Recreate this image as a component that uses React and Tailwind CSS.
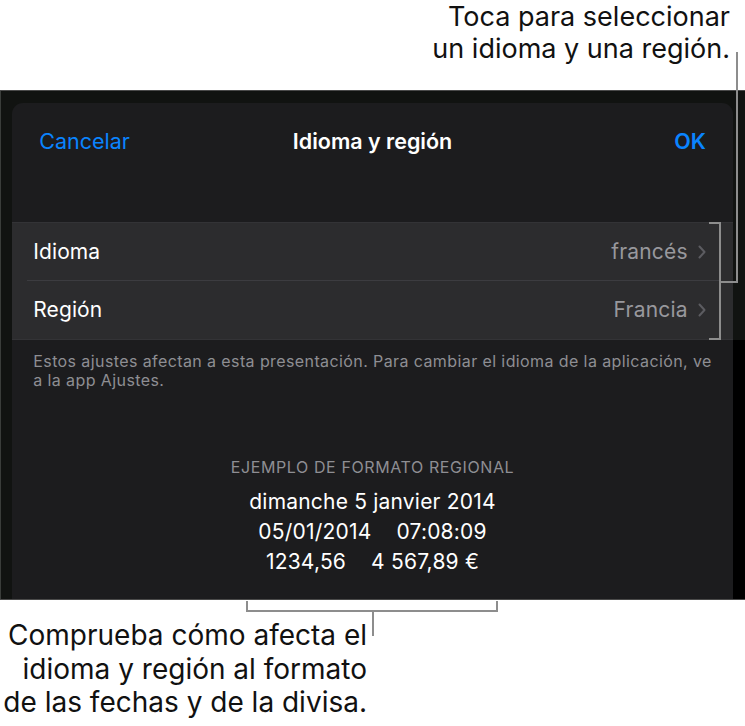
const ff = { fontFamily: 'Inter, "Noto Sans", sans-serif' }

const Chevron = () => (
  <svg width="8" height="14" viewBox="0 0 8 14" className="ml-[10px]">
    <path d="M1.5 1.5 L6.5 7 L1.5 12.5" fill="none" stroke="#5c5c61" strokeWidth="2" strokeLinecap="round" strokeLinejoin="round" />
  </svg>
)

const Row = ({ label, value, last }) => (
  <div className="relative flex h-[58px] items-center justify-between pl-[21px] pr-[27px]">
    <span className="text-[21px] tracking-[0.1px] text-white">{label}</span>
    <span className="flex items-center text-[21px] tracking-[0.2px] text-[#98989d]">
      {value}
      <Chevron />
    </span>
    {!last && <div className="absolute bottom-0 left-[15px] right-[12px] h-px bg-[#3c3c40]" />}
  </div>
)

export default function App() {
  return (
    <div className="relative h-[726px] w-[745px] overflow-hidden bg-white" style={ff}>
      {/* top callout */}
      <div className="h-[90px] pr-[15px] pt-[1px] text-right text-[27px] leading-[32px] text-[#111]">
        Toca para seleccionar
        <br />
        un idioma y una región.
      </div>

      {/* backdrop */}
      <div className="flex h-[510px] border-t border-b border-[#4a4a4a] bg-[#111311]">
        <div className="relative w-[13px] border-l border-[#3a3d3a]" />
        <div className="flex flex-1 flex-col pt-[12px]">
          <div className="flex-1 rounded-t-[11px] bg-[#1c1c1e]">
            <div className="grid h-[76px] grid-cols-[1fr_auto_1fr] items-center px-[27px] pt-[1px]">
              <span className="text-[21.5px] text-[#0a84ff]">Cancelar</span>
              <span className="text-[21.5px] font-semibold text-white">Idioma y región</span>
              <span className="text-right text-[21.5px] font-semibold text-[#0a84ff]">OK</span>
            </div>
            <div className="mt-[43px] border-y border-[#333336] bg-[#2c2c2e]">
              <Row label="Idioma" value="francés" />
              <Row label="Región" value="Francia" last />
            </div>
            <p className="mt-[12px] px-[21px] text-[16px] leading-[19px] tracking-[0.4px] text-[#8e8e93]">
              <span className="whitespace-nowrap">Estos ajustes afectan a esta presentación. Para cambiar el idioma de la aplicación, ve</span>
              <br />
              a la app Ajustes.
            </p>
            <div className="mt-[67px] flex flex-col items-center">
              <span className="text-[16px] leading-[20px] tracking-[0.6px] text-[#8e8e93]">EJEMPLO DE FORMATO REGIONAL</span>
              <div className="mt-[10px] flex flex-col items-center text-[21px] leading-[30px] tracking-[0.2px] text-white">
                <span>dimanche 5 janvier 2014</span>
                <span className="flex gap-[25px]">
                  <span>05/01/2014</span>
                  <span>07:08:09</span>
                </span>
                <span className="flex gap-[25px]">
                  <span>1234,56</span>
                  <span>4 567,89 €</span>
                </span>
              </div>
            </div>
          </div>
        </div>
        <div className="flex w-[13px] flex-col">
          <div className="h-[249px] bg-[#111311]" />
          <div className="flex-1 bg-black" />
        </div>
      </div>

      {/* bottom callout */}
      <div className="w-[367px] pt-[19px] text-right text-[28px] leading-[33.5px] text-[#111]">
        Comprueba cómo afecta el
        <br />
        idioma y región al formato
        <br />
        de las fechas y de la divisa.
      </div>

      {/* callout lines */}
      <svg className="pointer-events-none absolute left-0 top-0" width="745" height="726">
        <g fill="none" stroke="#8d8d8d" strokeWidth="2">
          <path d="M737 52 V282 H720" />
          <path d="M709 223 H720 V339 H709" />
          <path d="M247 601 V611 H497 V601" />
          <path d="M373 611 V636" />
        </g>
      </svg>
    </div>
  )
}
